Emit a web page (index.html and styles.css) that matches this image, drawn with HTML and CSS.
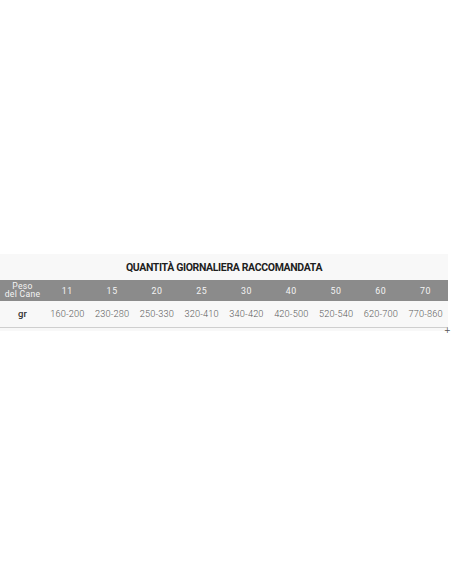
FILE: index.html
```html
<!DOCTYPE html>
<html lang="it">
<head>
<meta charset="utf-8">
<title>Quantità giornaliera raccomandata</title>
<link rel="stylesheet" href="styles.css">
</head>
<body>
<main class="page">
  <section class="panel">
    <h2 class="title">QUANTITÀ GIORNALIERA RACCOMANDATA</h2>
    <div class="row head">
      <div class="cell label">Peso<br>del Cane</div>
      <div class="cell">11</div>
      <div class="cell">15</div>
      <div class="cell">20</div>
      <div class="cell">25</div>
      <div class="cell">30</div>
      <div class="cell">40</div>
      <div class="cell">50</div>
      <div class="cell">60</div>
      <div class="cell">70</div>
    </div>
    <div class="row body">
      <div class="cell label">gr</div>
      <div class="cell">160-200</div>
      <div class="cell">230-280</div>
      <div class="cell">250-330</div>
      <div class="cell">320-410</div>
      <div class="cell">340-420</div>
      <div class="cell">420-500</div>
      <div class="cell">520-540</div>
      <div class="cell">620-700</div>
      <div class="cell">770-860</div>
    </div>
    <span class="mark">+</span>
  </section>
</main>
</body>
</html>
```
FILE: styles.css
```css
html, body {
  margin: 0;
  padding: 0;
  background: #ffffff;
}
.page {
  min-height: 100vh;
  display: flex;
  flex-direction: column;
  justify-content: center;
  align-items: flex-start;
}
.panel {
  position: relative;
  width: 448px;
  height: 77px;
  background: #f8f8f8;
  font-family: Roboto, "Liberation Sans", sans-serif;
}
.title {
  margin: 0;
  height: 26px;
  display: flex;
  align-items: center;
  justify-content: center;
  font-size: 10.5px;
  font-weight: 700;
  letter-spacing: -0.35px;
  color: #1e1e1e;
  padding-top: 1px;
  box-sizing: border-box;
}
.row {
  display: grid;
  grid-template-columns: 45px repeat(9, 1fr);
}
.head {
  height: 21px;
  background: #8b8b8b;
  color: #f4f4f4;
  font-size: 8.8px;
}
.body {
  height: 26px;
  border-bottom: 1px solid #cfcfcf;
  color: #5a5a5a;
  font-size: 9.2px;
  font-weight: 300;
}
.cell {
  display: flex;
  align-items: center;
  justify-content: center;
  text-align: center;
  letter-spacing: 0.15px;
}
.head .cell {
  padding-top: 2px;
  letter-spacing: 0.6px;
}
.head .label {
  line-height: 8.5px;
  font-size: 8.6px;
  padding-top: 0;
  letter-spacing: 0.3px;
}
.body .label {
  font-weight: 500;
  color: #333333;
  font-size: 9.5px;
}
.mark {
  position: absolute;
  left: 444px;
  top: 73px;
  font-size: 8px;
  line-height: 8px;
  color: #555555;
  font-family: "DejaVu Sans", sans-serif;
}
```
